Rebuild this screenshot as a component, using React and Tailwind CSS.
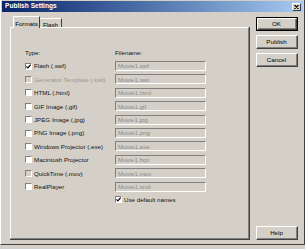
const rows = [
  { label: "Flash (.swf)", file: "Movie1.swf", checked: true },
  { label: "Generator Template (.swt)", file: "Movie1.swt", disabled: true },
  { label: "HTML (.html)", file: "Movie1.html" },
  { label: "GIF Image (.gif)", file: "Movie1.gif" },
  { label: "JPEG Image (.jpg)", file: "Movie1.jpg" },
  { label: "PNG Image (.png)", file: "Movie1.png" },
  { label: "Windows Projector (.exe)", file: "Movie1.exe" },
  { label: "Macintosh Projector", file: "Movie1.hqx" },
  { label: "QuickTime (.mov)", file: "Movie1.mov", grayBox: true },
  { label: "RealPlayer", file: "Movie1.smil" },
];

function Check({ checked, gray }) {
  return (
    <span
      className={`flex h-[7px] w-[7px] shrink-0 items-center justify-center border-t border-l border-t-[#808080] border-l-[#808080] border-r border-b border-r-white border-b-white ${
        gray ? "bg-[#d4d0c8]" : "bg-white"
      }`}
    >
      {checked && (
        <svg width="5" height="5" viewBox="0 0 7 7">
          <path d="M0.5 3.2 L2.6 5.4 L6.5 1" stroke="#000" strokeWidth="1.6" fill="none" />
        </svg>
      )}
    </span>
  );
}

function Btn({ children, isDefault, className = "" }) {
  return (
    <div className={`${isDefault ? "border border-black" : ""} ${className}`}>
      <div className="h-full border-t border-l border-white border-r border-b border-r-[#404040] border-b-[#404040]">
        <div className="flex h-full items-center justify-center border-r border-b border-r-[#808080] border-b-[#808080] text-[6.2px] text-black">
          {children}
        </div>
      </div>
    </div>
  );
}

export default function App() {
  return (
    <div
      className="relative h-[249px] w-[305px] overflow-hidden bg-[#d4d0c8]"
      style={{ fontFamily: '"Liberation Sans", Arial, sans-serif' }}
    >
      <div className="flex h-[245px] flex-col border-l border-l-white border-r border-b border-r-[#404040] border-b-[#404040]">
        <div className="mx-[1px] mt-[1px] flex h-[11px] items-center justify-between bg-gradient-to-r from-[#0a246a] to-[#a6caf0] pl-[3px] pr-[2px]">
          <span className="text-[6.6px] font-bold leading-none text-white">Publish Settings</span>
          <span className="flex h-[8px] w-[9px] items-center justify-center border-t border-l border-white border-r border-b border-r-[#404040] border-b-[#404040] bg-[#d4d0c8]">
            <svg width="5" height="4" viewBox="0 0 5 4">
              <path d="M0.5 0 L4.5 4 M4.5 0 L0.5 4" stroke="#000" strokeWidth="1.1" />
            </svg>
          </span>
        </div>

        <div className="flex flex-1 pl-[9px] pt-[4px]">
          <div className="flex w-[240px] flex-col">
            <div className="flex h-[11px] items-end pl-[3px]">
              <div className="relative z-10 -mb-[1px] flex h-[12px] w-[27px] items-start justify-center border-t border-l border-white border-r border-r-[#404040] bg-[#d4d0c8] pt-[2px] text-[6.2px] text-black">
                Formats
              </div>
              <div className="flex h-[9px] w-[22px] items-start justify-center border-t border-white border-r border-r-[#404040] pt-[1px] text-[6.2px] text-black">
                Flash
              </div>
            </div>
            <div className="h-[213px] border-r border-b border-r-[#404040] border-b-[#404040]">
              <div className="h-full border-t border-l border-white border-r border-b border-r-[#808080] border-b-[#808080] pl-[14px] pt-[18px] text-[6.2px] text-[#111]">
                <div className="flex h-[13.4px] items-center">
                  <span className="w-[90px]">Type:</span>
                  <span>Filename:</span>
                </div>
                {rows.map((r) => (
                  <div key={r.file} className="flex h-[13.4px] items-center">
                    <div className="flex w-[90px] items-center gap-[2px]">
                      <Check checked={r.checked} gray={r.disabled || r.grayBox} />
                      <span className={r.disabled ? "text-[#9a968e]" : ""}>{r.label}</span>
                    </div>
                    <div className="flex h-[10px] w-[91px] items-center border-t border-l border-t-[#808080] border-l-[#808080] border-r border-b border-r-white border-b-white bg-[#d4d0c8] pl-[2px] text-[#8c8a84]">
                      {r.file}
                    </div>
                  </div>
                ))}
                <div className="flex h-[13.4px] items-center">
                  <span className="w-[90px]" />
                  <Check checked />
                  <span className="ml-[2px]">Use default names</span>
                </div>
              </div>
            </div>
          </div>

          <div className="ml-[6px] flex w-[42px] flex-col pb-[4px] pt-[1px]">
            <Btn isDefault className="h-[14px]">OK</Btn>
            <Btn className="mt-[4px] h-[14px]">Publish</Btn>
            <Btn className="mt-[4px] h-[14px]">Cancel</Btn>
            <div className="flex-1" />
            <Btn className="h-[14px]">Help</Btn>
          </div>
        </div>
      </div>
    </div>
  );
}
